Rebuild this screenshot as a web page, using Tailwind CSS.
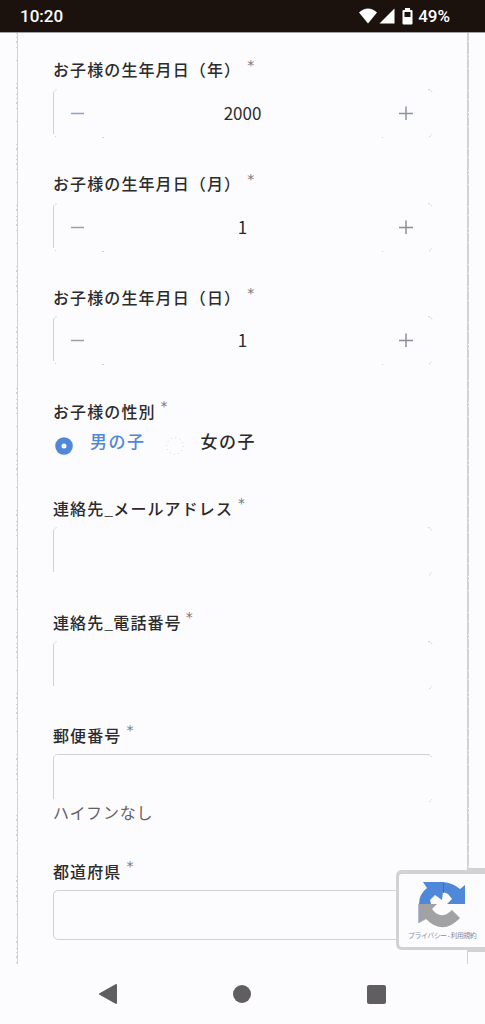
<!DOCTYPE html>
<html lang="ja">
<head>
    <meta charset="utf-8">
    <meta name="viewport" content="width=device-width, initial-scale=1">
    <title>お申し込みフォーム</title>
    <script src="https://cdn.jsdelivr.net/npm/@tailwindcss/browser@4"></script>
</head>

<body class="w-[485px] h-[1024px] overflow-hidden bg-[#fcfcfe] text-[#2b2a2c] font-['Noto_Sans_CJK_JP',sans-serif]">

    <!-- shared field frames -->
    <svg class="hidden">
        <defs>
            <g id="frame" fill="none" stroke="#d2d2d5">
                <path d="M.5 4V45"/>
                <path d="M.5 4Q.8 1 4.5.5" stroke-dasharray="2 1"/>
                <path d="M375 .5Q378 1 379 3.500" stroke-dasharray="2 1"/>
                <path d="M376 48Q378 47 379 45" stroke-dasharray="2 1"/>
            </g>
            <g id="seams" fill="#d2d2d5">
                <path d="M2 47h1v1h-1zM49 48h2v1h-2zM329 48h1v1h-1z"/>
            </g>
        </defs>
    </svg>

    <!-- status bar -->
    <header class="h-[33px] flex items-center justify-between bg-[#1b120d] border-b border-[#a3a09f] pl-5 pr-[35px] text-white font-['Roboto',sans-serif] font-medium text-[17px]">
        <span class="leading-none mt-px">10:20</span>
        <div class="flex items-center">
            <svg class="w-[18px] h-4" viewBox="0 0 18 16" fill="#fff"><path d="M0 4.500Q9-3.500 18 4.500L9 15.500z"/></svg>
            <svg class="w-4 h-4 ml-[2px]" viewBox="0 0 16 16" fill="#fff"><path d="M15.500 .5V15.500H.5z"/></svg>
            <svg class="w-[11px] h-[17px] ml-[7px]" viewBox="0 0 11 17"><path fill="#fff" fill-rule="evenodd" d="M3 0h5v2h1.500q1 0 1 1v12.500q0 1-1 1h-8q-1 0-1-1V3q0-1 1-1H3zM2.500 4v5h6V4z"/></svg>
            <span class="ml-[5px] leading-none mt-px">49%</span>
        </div>
    </header>

    <main class="relative h-[931px] pl-[53px] pr-[53px] pt-[26px]">
        <svg class="absolute left-4 top-0 w-[453px] h-[931px]" viewBox="0 0 453 931" fill="none" stroke="#d2d2d5">
            <path d="M1.500 0V931M451.500 0V839M451.500 916V931"/>
            <path d="M.5 0V931" stroke-dasharray="1 3 1 3 2 4 1 12 1 22 1 3 2 5"/>
            <path d="M452.500 0V839" stroke-dasharray="8 1 12 1 3 1 9 1 21 1"/>
        </svg>

        <div class="h-[114px]">
            <label class="flex h-5 mb-[10px] items-center text-base tracking-[1.1px] font-medium">お子様の生年月日<span>（</span><span>年）</span><span class="ml-1.5 -mt-[7px] font-['DejaVu_Sans',sans-serif] text-[14px] font-normal text-[#77777c]">*</span></label>
            <div class="relative h-[49px] flex items-center justify-between pl-[18px] pr-[19px] pb-[2px] text-[17px]">
                <svg class="absolute inset-0 w-[380px] h-[49px]"><use href="#frame"/><use href="#seams"/></svg>
                <svg class="w-[13px] h-[14px]" fill="none" stroke="#8ea3c4" stroke-width="1.500"><path d="M0 7.500H13"/></svg>
                <span class="ml-[2px]">2000</span>
                <svg class="w-[14px] h-[14px]" fill="none" stroke="#8d929f" stroke-width="1.500"><path d="M0 7.500H14M7 .5V14"/></svg>
            </div>
        </div>

        <div class="h-[114px]">
            <label class="flex h-5 mb-[10px] items-center text-base tracking-[1.1px] font-medium">お子様の生年月日<span>（</span><span>月）</span><span class="ml-1.5 -mt-[7px] font-['DejaVu_Sans',sans-serif] text-[14px] font-normal text-[#77777c]">*</span></label>
            <div class="relative h-[49px] flex items-center justify-between pl-[18px] pr-[19px] pb-[2px] text-[17px]">
                <svg class="absolute inset-0 w-[380px] h-[49px]"><use href="#frame"/><use href="#seams"/></svg>
                <svg class="w-[13px] h-[14px]" fill="none" stroke="#a0a0a4" stroke-width="1.500"><path d="M0 7.500H13"/></svg>
                <span class="ml-[2px]">1</span>
                <svg class="w-[14px] h-[14px]" fill="none" stroke="#8d8d94" stroke-width="1.500"><path d="M0 7.500H14M7 .5V14"/></svg>
            </div>
        </div>

        <div class="h-[114px]">
            <label class="flex h-5 mb-[9px] items-center text-base tracking-[1.1px] font-medium">お子様の生年月日<span>（</span><span>日）</span><span class="ml-1.5 -mt-[7px] font-['DejaVu_Sans',sans-serif] text-[14px] font-normal text-[#77777c]">*</span></label>
            <div class="relative h-[49px] flex items-center justify-between pl-[18px] pr-[19px] pb-[2px] text-[17px]">
                <svg class="absolute inset-0 w-[380px] h-[49px]"><use href="#frame"/><use href="#seams"/></svg>
                <svg class="w-[13px] h-[14px]" fill="none" stroke="#a0a0a4" stroke-width="1.500"><path d="M0 7.500H13"/></svg>
                <span class="ml-[2px]">1</span>
                <svg class="w-[14px] h-[14px]" fill="none" stroke="#8d8d94" stroke-width="1.500"><path d="M0 7.500H14M7 .5V14"/></svg>
            </div>
        </div>

        <div class="h-[97px]">
            <label class="flex h-5 items-center text-base tracking-[1.1px] font-medium">お子様の性別<span class="ml-[5px] -mt-[9px] font-['DejaVu_Sans',sans-serif] text-[14px] font-normal text-[#77777c]">*</span></label>
            <div class="flex items-center h-5 mt-[10px] text-[17px] tracking-[1.5px] font-medium">
                <svg class="w-[18px] h-[18px] ml-[2px] mt-[10px]" viewBox="0 0 18 18"><circle cx="9" cy="9" r="8.800" fill="#4f87d9"/><circle cx="9" cy="9" r="2.500" fill="#fcfcfe"/></svg>
                <span class="ml-[17px] text-[#4f87d9]">男の子</span>
                <svg class="w-[18px] h-[18px] ml-5 mt-[10px]" viewBox="0 0 18 18" fill="none"><circle cx="9" cy="9" r="8.300" stroke="#d2d2d5" stroke-dasharray="1 3.350"/></svg>
                <span class="ml-[17px]">女の子</span>
            </div>
        </div>

        <div class="h-[114px]">
            <label class="flex h-5 mb-[9px] items-center text-base tracking-[1.1px] font-medium">連絡先<span class="-mr-px font-light">_</span>メールアドレス<span class="ml-[5px] -mt-[9px] font-['DejaVu_Sans',sans-serif] text-[14px] font-normal text-[#77777c]">*</span></label>
            <svg class="w-[380px] h-[49px]"><use href="#frame"/></svg>
        </div>

        <div class="h-[113px]">
            <label class="flex h-5 mb-[9px] items-center text-base tracking-[1.1px] font-medium">連絡先<span class="-mr-px font-light">_</span>電話番号<span class="ml-1 -mt-[9px] font-['DejaVu_Sans',sans-serif] text-[14px] font-normal text-[#77777c]">*</span></label>
            <svg class="w-[380px] h-[49px]"><use href="#frame"/></svg>
        </div>

        <div class="h-[136px]">
            <label class="flex h-5 mb-[9px] items-center text-base tracking-[1.1px] font-medium">郵便番号<span class="ml-[5px] -mt-[9px] font-['DejaVu_Sans',sans-serif] text-[14px] font-normal text-[#77777c]">*</span></label>
            <svg class="w-[380px] h-[49px]"><use href="#frame"/><path d="M4 .5H376" stroke="#d2d2d5"/></svg>
            <p class="h-5 leading-[18px] text-base tracking-[0.7px] text-[#626166]">ハイフンなし</p>
        </div>

        <div>
            <label class="flex h-5 mb-[9px] items-center text-base tracking-[1.1px] font-medium">都道府県<span class="ml-[5px] -mt-[9px] font-['DejaVu_Sans',sans-serif] text-[14px] font-normal text-[#77777c]">*</span></label>
            <div class="h-[50px] w-[380px] border border-[#d2d2d5] rounded-[5px]"></div>
        </div>

        <!-- reCAPTCHA badge -->
        <div class="absolute left-[396px] top-[837px] w-[89px] h-[84px]">
            <svg class="absolute inset-0 w-[89px] h-[84px] overflow-visible">
                <path fill="#d2d2d5" d="M5 0H71V-2H89V82H71V80H5Q0 79 0 74V6Q0 1 5 0z"/>
                <path fill="#fcfcfe" d="M6 4H89V77H6Q3 77 3 73V7Q3 4 6 4z"/>
                <g transform="translate(23 10)">
                    <path fill="#4f87d9" d="M0 24Q0 14 8 8L4 2H24Q34 3 41 9L46 5V24H28L33 19L29 14L24 12L23 20L16 15L11 20L12 24z"/>
                    <path fill="#a2a2a5" d="M0 24H18L13 29Q22 41 33 30L41 38Q24 56 7 39L0 43z"/>
                    <path d="M24.500 3V13" stroke="#51618a" stroke-width=".8"/>
                    <path d="M-.5 24V43" stroke="#aebdd8"/>
                </g>
            </svg>
            <p class="absolute left-3 top-[61px] w-[70px] h-2 leading-2 text-[7px] tracking-[-0.55px] whitespace-nowrap text-[#7e8fae]">プライバシー - 利用規約</p>
        </div>
    </main>

    <!-- navigation bar -->
    <nav class="flex h-[60px] items-center justify-between pl-[99px] pr-[99px]">
        <svg class="w-[18px] h-5" viewBox="0 0 18 20"><path d="M1 10L17 1V19z" fill="#605e60" stroke="#605e60" stroke-width="2" stroke-linejoin="round"/></svg>
        <div class="w-[18px] h-[18px] rounded-full bg-[#605e60]"></div>
        <div class="w-[19px] h-[19px] rounded-[2px] bg-[#605e60]"></div>
    </nav>

</body>
</html>
